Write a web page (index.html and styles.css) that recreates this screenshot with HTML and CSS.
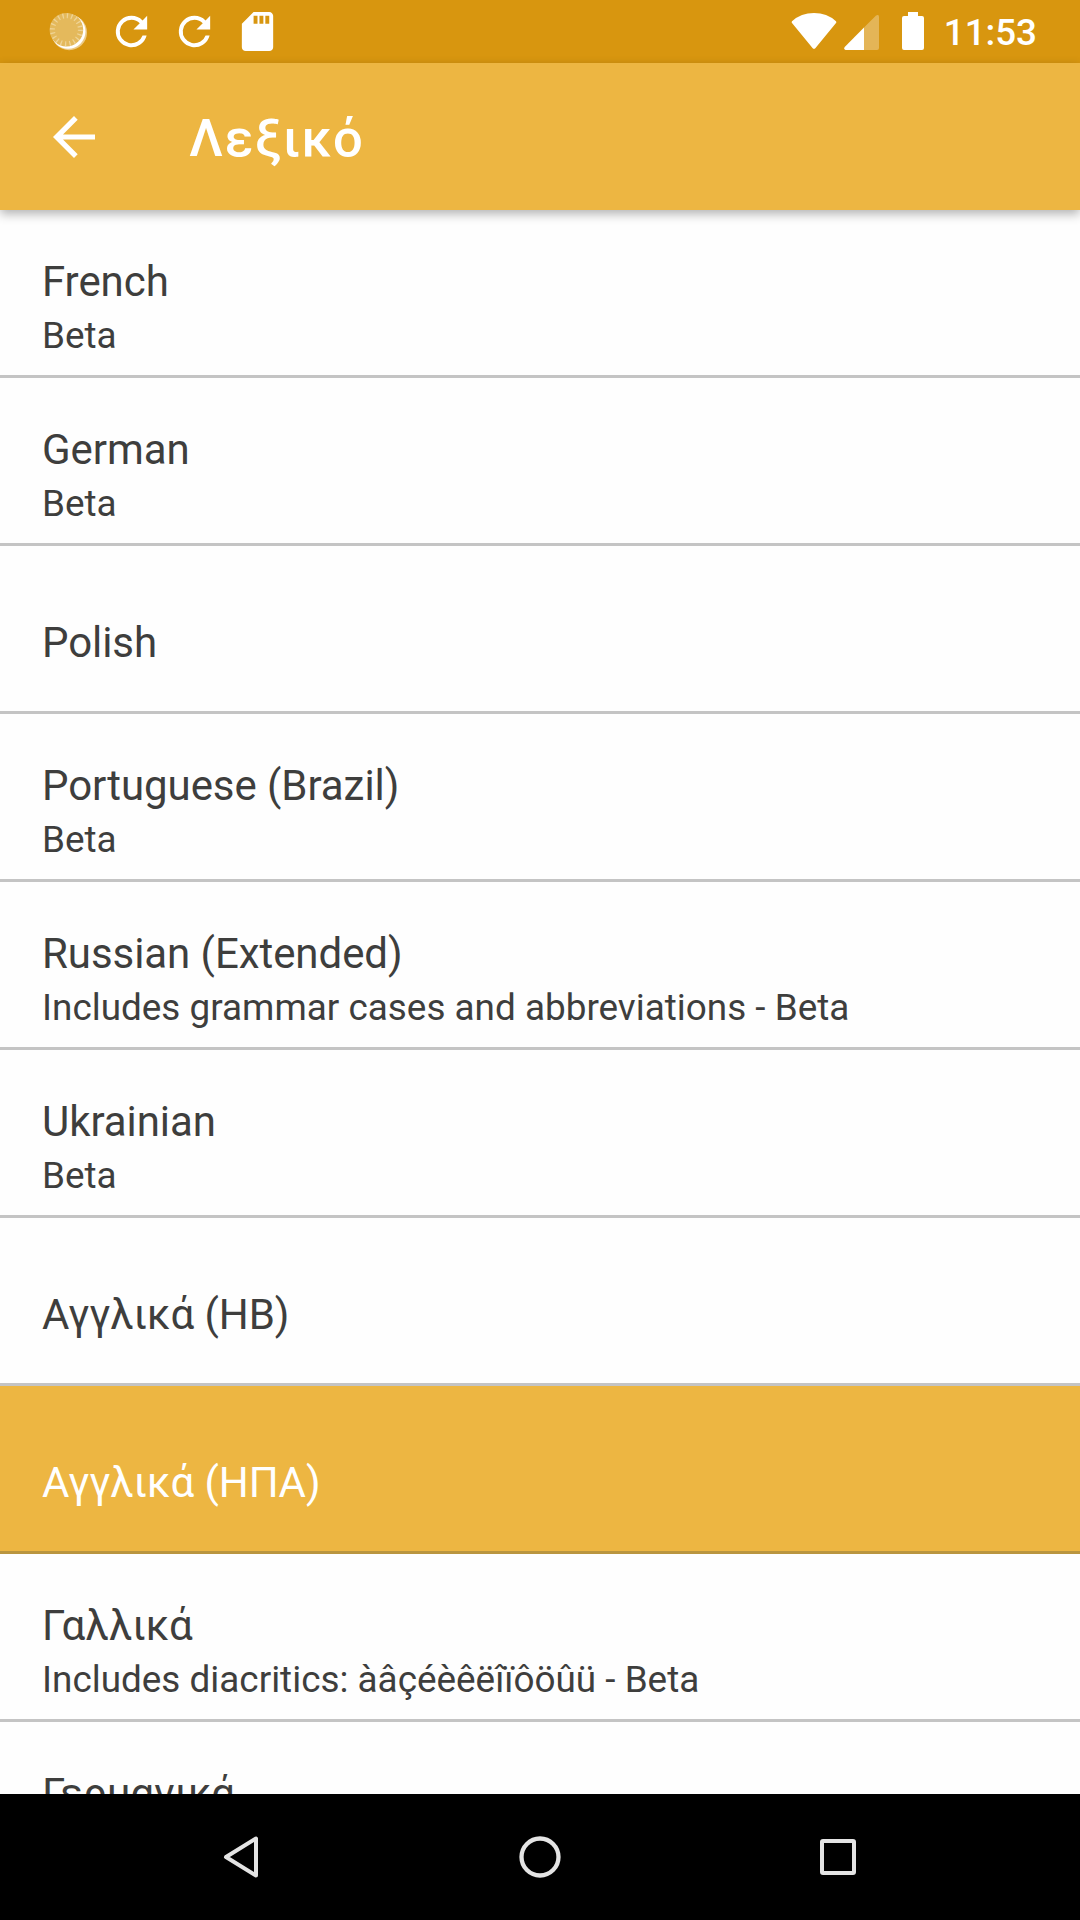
FILE: index.html
```html
<!DOCTYPE html>
<html lang="el">
<head>
<meta charset="utf-8">
<title>Λεξικό</title>
<link rel="stylesheet" href="styles.css">
</head>
<body>
<div class="screen">
  <header class="status">
    <div class="notifications">
      <svg class="notice" viewBox="0 0 47 47">
        <circle cx="24.200" cy="24.400" r="17.800" fill="#fff" opacity=".5"/>
        <circle cx="23.200" cy="23.400" r="17.300" fill="#fff"/>
        <circle cx="21.400" cy="21.700" r="16.800" fill="#e4b95c"/>
        <circle cx="21.400" cy="21.700" r="14" fill="none" stroke="#efd496" stroke-width="5" stroke-dasharray="1.300 3.098"/>
      </svg>
      <svg class="notice" viewBox="0 0 24 24"><path fill="#fff" d="M17.65 6.35A7.96 7.96 0 0 0 12 4a8 8 0 1 0 7.73 10h-2.08A6 6 0 1 1 12 6c1.66 0 3.14.69 4.22 1.78L13 11h7V4z"/></svg>
      <svg class="notice" viewBox="0 0 24 24"><path fill="#fff" d="M17.65 6.35A7.96 7.96 0 0 0 12 4a8 8 0 1 0 7.73 10h-2.08A6 6 0 1 1 12 6c1.66 0 3.14.69 4.22 1.78L13 11h7V4z"/></svg>
      <svg class="notice" viewBox="0 0 24 24"><path fill="#fff" d="M18 2h-8L4.02 8 4 20c0 1.1.9 2 2 2h12c1.1 0 2-.9 2-2V4c0-1.1-.9-2-2-2zm-6 6h-2V4h2v4zm3 0h-2V4h2v4zm3 0h-2V4h2v4z"/></svg>
    </div>
    <div class="system">
      <svg class="wifi" viewBox="0 0 46 38"><path fill="#fff" d="M1 9.2Q10 1 23 1t22 8.2q.8.9 0 1.9L24.5 36q-1.500 1.700-3 0L1 11.100q-.8-1 0-1.900z"/></svg>
      <svg class="signal" viewBox="0 0 35 35"><path fill="#fff" opacity=".3" d="M20 12.500L31.800.700Q35-1.200 35 2v31q0 2-2 2H20z"/><path fill="#fff" d="M20 12.500V35H1.500Q-.8 34.400.7 32z"/></svg>
      <svg class="battery" viewBox="0 0 22 38"><path fill="#fff" d="M6 0h10v4h4q2 0 2 2v30q0 2-2 2H2q-2 0-2-2V6q0-2 2-2h4z"/></svg>
      <span class="clock">11:53</span>
    </div>
  </header>
  <div class="appbar">
    <svg class="back" viewBox="0 0 42 42"><path fill="#fff" d="M42 18.400v5.200H10L24.700 38.300 21 42 0 21 21 0l3.700 3.700L10 18.400z"/></svg>
    <h1 class="title">Λεξικό</h1>
  </div>
  <ul class="list">
    <li class="row"><span class="name">French</span><span class="note">Beta</span></li>
    <li class="row"><span class="name">German</span><span class="note">Beta</span></li>
    <li class="row single"><span class="name">Polish</span></li>
    <li class="row"><span class="name">Portuguese (Brazil)</span><span class="note">Beta</span></li>
    <li class="row"><span class="name">Russian (Extended)</span><span class="note">Includes grammar cases and abbreviations - Beta</span></li>
    <li class="row"><span class="name">Ukrainian</span><span class="note">Beta</span></li>
    <li class="row single"><span class="name">Αγγλικά (ΗΒ)</span></li>
    <li class="row single selected"><span class="name">Αγγλικά (ΗΠΑ)</span></li>
    <li class="row"><span class="name">Γαλλικά</span><span class="note">Includes diacritics: àâçéèêëîïôöûü - Beta</span></li>
    <li class="row"><span class="name">Γερμανικά</span></li>
  </ul>
  <nav class="navbar">
    <svg class="key" viewBox="0 0 48 48"><path d="M38 5.500v37L8 24z" fill="none" stroke="#e4e4e4" stroke-width="4" stroke-linejoin="round"/></svg>
    <svg class="key" viewBox="0 0 48 48"><circle cx="24" cy="24" r="18.500" fill="none" stroke="#e4e4e4" stroke-width="4.300"/></svg>
    <svg class="key" viewBox="0 0 48 48"><rect x="8" y="8" width="32" height="32" rx="1" fill="none" stroke="#e4e4e4" stroke-width="4"/></svg>
  </nav>
</div>
</body>
</html>
```
FILE: styles.css
```css
* { box-sizing: border-box; }
body { margin: 0; font-family: Roboto, "Noto Sans", sans-serif; }
svg { display: block; flex: none; }
.screen {
  width: 1080px;
  height: 1920px;
  display: flex;
  flex-direction: column;
  overflow: hidden;
  background: #fefefe;
}
.status {
  flex: none;
  height: 63px;
  display: flex;
  justify-content: space-between;
  padding: 0 43px 0 45px;
  background: #d8960f;
}
.notifications { display: flex; gap: 16px; padding-top: 8px; }
.notice { width: 47px; height: 47px; }
.system { display: flex; align-items: flex-start; }
.wifi { width: 46px; height: 38px; margin: 12px 7px 0 0; }
.signal { width: 35px; height: 35px; margin: 15px 23px 0 0; }
.battery { width: 22px; height: 38px; margin: 12px 20px 0 0; }
.clock { font-size: 36.75px; font-weight: 500; line-height: 44px; margin-top: 11px; color: #fff; }
.appbar {
  flex: none;
  height: 147px;
  display: flex;
  align-items: center;
  padding-left: 53px;
  background: #edb642;
  box-shadow: 0 4px 10px rgba(0, 0, 0, .3);
  z-index: 1;
}
.back { width: 42px; height: 42px; }
.title { margin: 3px 0 0 94px; font-size: 52.5px; font-weight: 500; line-height: 62px; letter-spacing: 1.3px; color: #fff; }
.list { flex: 1; min-height: 0; margin: 0; padding: 0; list-style: none; overflow: hidden; }
.row {
  height: 168px;
  display: flex;
  flex-direction: column;
  padding: 47px 42px 0;
  border-bottom: 3px solid #c4c4c4;
  color: #3e3e3d;
}
.single { padding-top: 72px; }
.selected { background: #edb642; border-bottom-color: #b9953f; color: #fff; }
.name { font-size: 42px; line-height: 50px; letter-spacing: -.06px; white-space: nowrap; }
.note { font-size: 36.88px; line-height: 44px; margin-top: 7px; white-space: nowrap; }
.navbar {
  flex: none;
  height: 126px;
  display: flex;
  align-items: center;
  justify-content: center;
  gap: 250px;
  background: #000;
}
.key { width: 48px; height: 48px; }
```
